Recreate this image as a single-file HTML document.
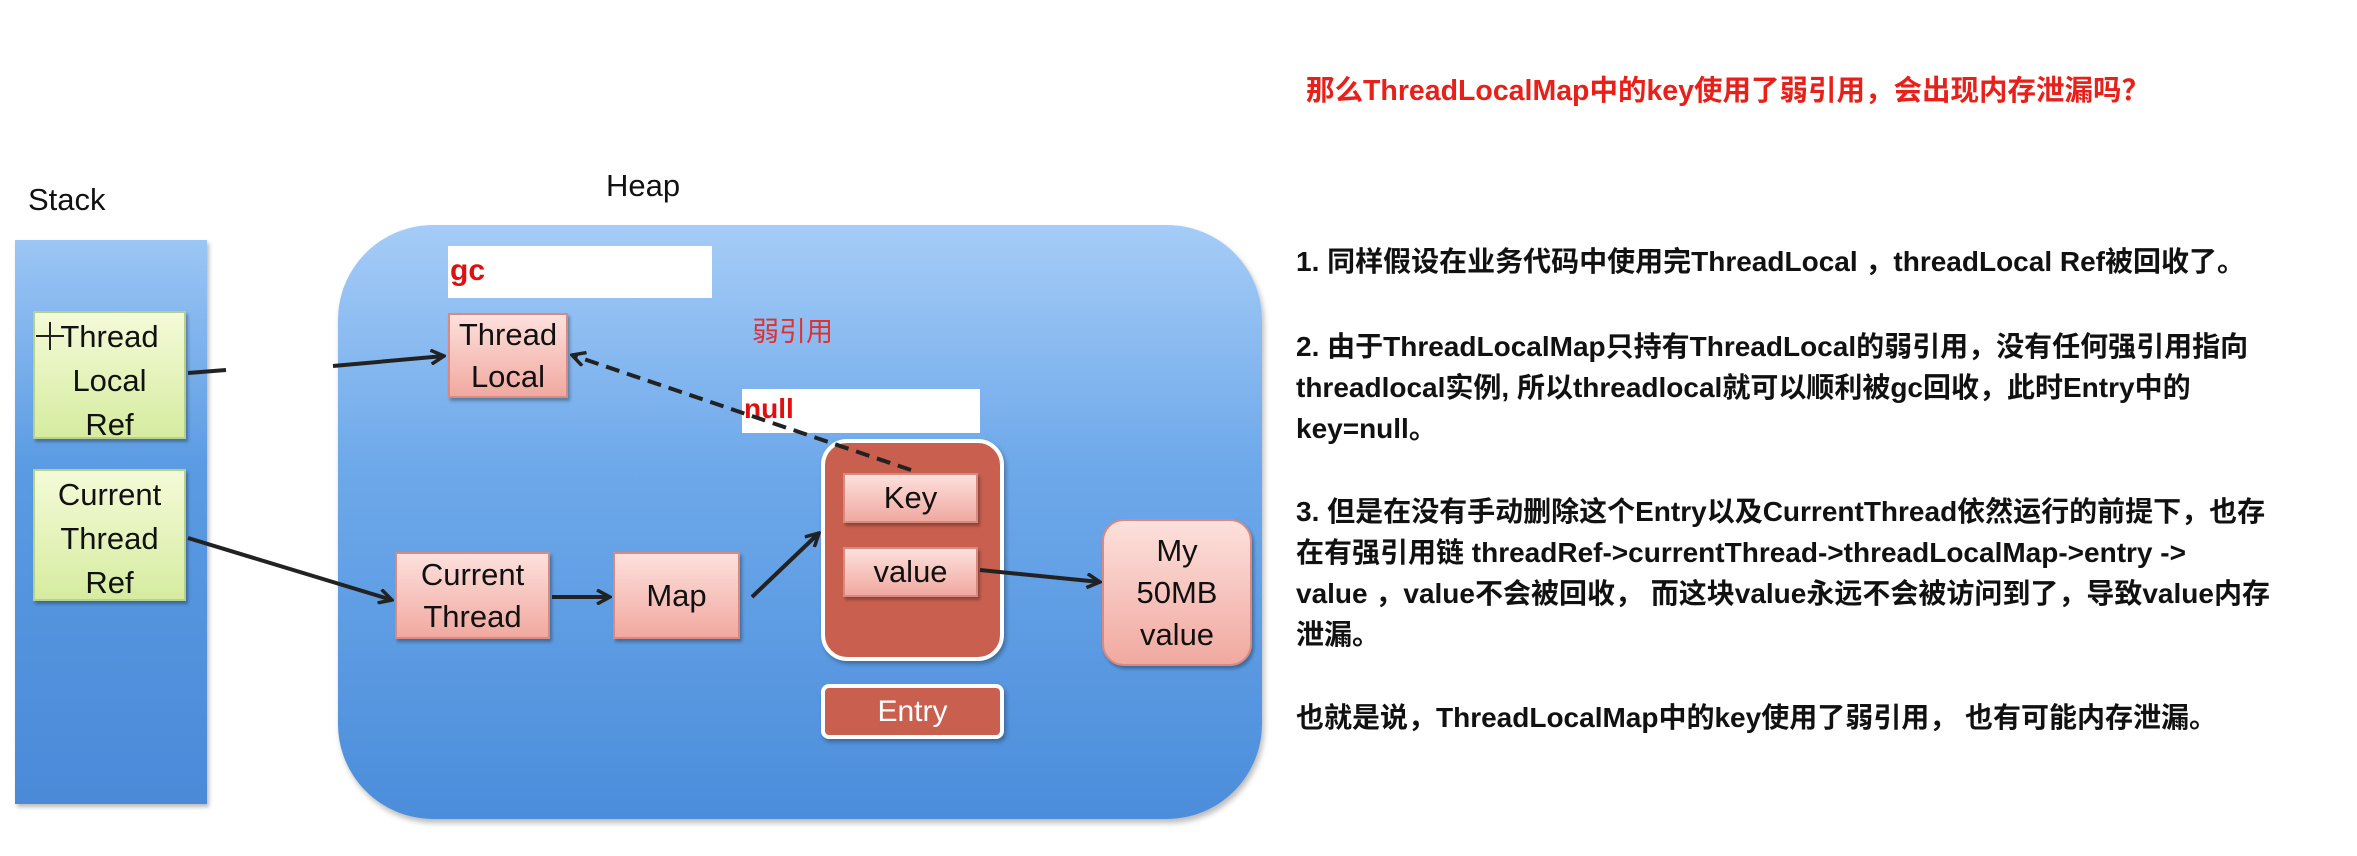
<!DOCTYPE html>
<html><head><meta charset="utf-8"><style>
body{margin:0;width:2357px;height:856px;background:#fff;position:relative;overflow:hidden;font-family:"Liberation Sans","Noto Sans CJK SC",sans-serif}
.a{position:absolute}
.lbl{font-size:31px;color:#111}
.stack{left:15px;top:240px;width:192px;height:564px;background:linear-gradient(#9cc6f5,#5b9be3 40%,#4a8ad8);box-shadow:2px 3px 4px #bbb}
.heap{left:338px;top:225px;width:924px;height:594px;border-radius:95px;background:linear-gradient(#a6ccf7,#6ea9ea 40%,#4b8ddb);box-shadow:2px 4px 6px #bbb}
.g{background:linear-gradient(#f4fad8,#d6eca0);border:2px solid #b7d08a;box-shadow:2px 3px 3px rgba(0,0,0,.3);text-align:center;font-size:31px;line-height:44px;color:#111;box-sizing:border-box}
.p{background:linear-gradient(#fde0dc,#f0a9a0);border:2px solid #d98a80;box-shadow:2px 3px 3px rgba(0,0,0,.3);text-align:center;font-size:31px;color:#111;box-sizing:border-box;display:flex;align-items:center;justify-content:center;line-height:42px}
.w{background:#fff}
.red{color:#e01010;font-weight:bold}
.t{position:absolute;left:1296px;font-size:28px;font-weight:bold;color:#111;white-space:nowrap;font-family:"Liberation Sans","Noto Sans CJK SC",sans-serif}
</style></head><body>
<div class="a lbl" style="left:28px;top:182px">Stack</div>
<div class="a lbl" style="left:606px;top:168px">Heap</div>
<div class="a stack"></div>
<div class="a heap"></div>
<div class="a g" style="left:33px;top:311px;width:153px;height:128px;padding-top:2px">Thread<br>Local<br>Ref</div>
<div class="a g" style="left:33px;top:469px;width:153px;height:132px;padding-top:2px">Current<br>Thread<br>Ref</div>
<div class="a w" style="left:448px;top:246px;width:264px;height:52px"><span class="red" style="font-size:30px;position:absolute;left:2px;top:8px">gc</span></div>
<div class="a p" style="left:448px;top:313px;width:120px;height:85px">Thread<br>Local</div>
<div class="a" style="left:752px;top:310px;font-size:27px;color:#e03030">弱引用</div>
<div class="a w" style="left:742px;top:389px;width:238px;height:44px"><span class="red" style="font-size:28px;position:absolute;left:2px;top:4px">null</span></div>
<div class="a" style="left:821px;top:439px;width:183px;height:222px;background:#c9604f;border:4px solid #fff;border-radius:26px;box-sizing:border-box;box-shadow:2px 3px 4px rgba(0,0,0,.3)"></div>
<div class="a p" style="left:843px;top:473px;width:135px;height:50px">Key</div>
<div class="a p" style="left:843px;top:547px;width:135px;height:50px">value</div>
<div class="a" style="left:821px;top:684px;width:183px;height:55px;background:#c9604f;border:4px solid #fff;border-radius:8px;box-sizing:border-box;color:#fff;font-size:30px;text-align:center;line-height:48px;box-shadow:2px 3px 4px rgba(0,0,0,.3)">Entry</div>
<div class="a p" style="left:395px;top:552px;width:155px;height:87px">Current<br>Thread</div>
<div class="a p" style="left:613px;top:552px;width:127px;height:87px">Map</div>
<div class="a p" style="left:1102px;top:519px;width:150px;height:147px;border-radius:22px">My<br>50MB<br>value</div>
<svg class="a" style="left:0;top:0" width="1300" height="856">
<defs><marker id="m" markerWidth="16" markerHeight="16" refX="14" refY="8" orient="auto" markerUnits="userSpaceOnUse" viewBox="0 0 16 16"><path d="M1,1 L14,8 L1,15" fill="none" stroke="#222" stroke-width="3.5"/></marker></defs>
<g stroke="#222" stroke-width="4" fill="none">
<line x1="188" y1="373" x2="226" y2="370"/>
<line x1="333" y1="366" x2="444" y2="356" marker-end="url(#m)"/>
<line x1="188" y1="538" x2="392" y2="600" marker-end="url(#m)"/>
<line x1="552" y1="597" x2="610" y2="597" marker-end="url(#m)"/>
<line x1="752" y1="597" x2="819" y2="533" marker-end="url(#m)"/>
<line x1="980" y1="570" x2="1100" y2="582" marker-end="url(#m)"/>
<line x1="911" y1="470" x2="572" y2="355" stroke-dasharray="14,8" marker-end="url(#m)"/>
</g>
<g stroke="#222" stroke-width="2"><line x1="36" y1="336" x2="64" y2="336"/><line x1="50" y1="322" x2="50" y2="350"/></g>
</svg>
<div class="a" style="left:1306px;top:68px;font-size:28.5px;font-weight:bold;color:#e8201a;white-space:nowrap">那么ThreadLocalMap中的key使用了弱引用，会出现内存泄漏吗？</div>
<div class="t" style="top:240px">1. 同样假设在业务代码中使用完ThreadLocal ，threadLocal Ref被回收了。</div>
<div class="t" style="top:325px">2. 由于ThreadLocalMap只持有ThreadLocal的弱引用，没有任何强引用指向</div>
<div class="t" style="top:366px">threadlocal实例, 所以threadlocal就可以顺利被gc回收，此时Entry中的</div>
<div class="t" style="top:407px">key=null。</div>
<div class="t" style="top:490px">3. 但是在没有手动删除这个Entry以及CurrentThread依然运行的前提下，也存</div>
<div class="t" style="top:531px">在有强引用链 threadRef-&gt;currentThread-&gt;threadLocalMap-&gt;entry -&gt;</div>
<div class="t" style="top:572px">value ，value不会被回收， 而这块value永远不会被访问到了，导致value内存</div>
<div class="t" style="top:613px">泄漏。</div>
<div class="t" style="top:696px">也就是说，ThreadLocalMap中的key使用了弱引用， 也有可能内存泄漏。</div>
</body></html>
